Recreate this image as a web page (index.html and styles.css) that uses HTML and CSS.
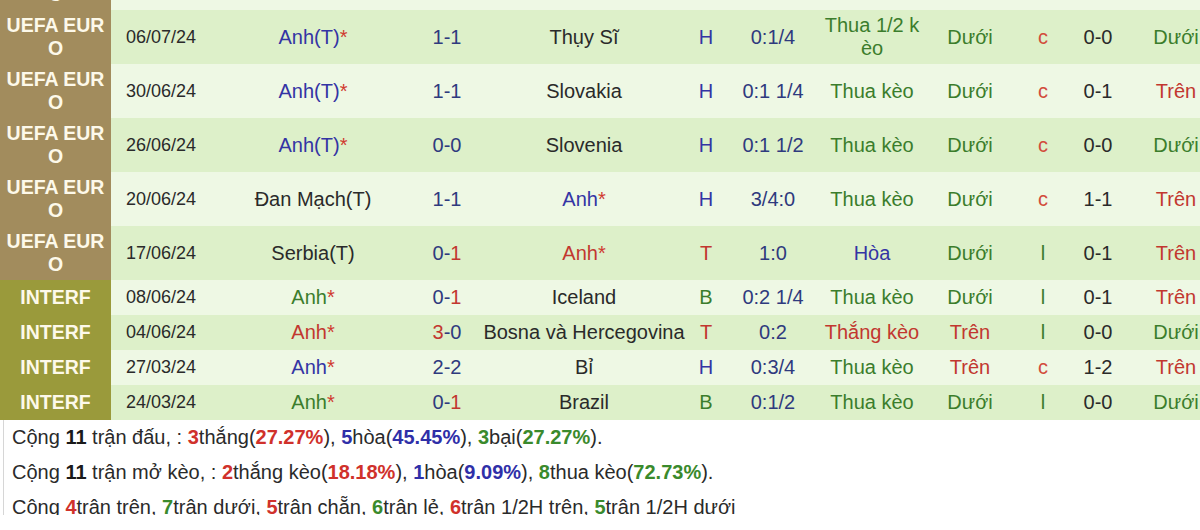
FILE: index.html
```html
<!DOCTYPE html>
<html lang="vi">
<head>
<meta charset="utf-8">
<link rel="stylesheet" href="styles.css">
</head>
<body>
<div class="frame">
  <div class="clip">
    <table class="matches">
      <colgroup>
        <col class="c-league"><col class="c-date"><col class="c-home"><col class="c-score"><col class="c-away"><col class="c-htb"><col class="c-odds"><col class="c-res"><col class="c-ou"><col class="c-cl"><col class="c-half"><col class="c-last">
      </colgroup>
      <tbody>
        <tr class="euro light">
          <td class="league">UEFA EURO</td><td></td><td></td><td></td><td></td><td></td><td></td><td></td><td></td><td></td><td></td><td></td>
        </tr>
        <tr class="euro dark">
          <td class="league">UEFA EURO</td><td class="date">06/07/24</td><td><span class="b">Anh(T)</span><span class="star">*</span></td><td class="n">1-1</td><td class="k">Thụy Sĩ</td><td class="b">H</td><td class="n">0:1/4</td><td class="g">Thua 1/2 k èo</td><td class="g">Dưới</td><td class="c">c</td><td class="k">0-0</td><td class="g">Dưới</td>
        </tr>
        <tr class="euro light">
          <td class="league">UEFA EURO</td><td class="date">30/06/24</td><td><span class="b">Anh(T)</span><span class="star">*</span></td><td class="n">1-1</td><td class="k">Slovakia</td><td class="b">H</td><td class="n">0:1 1/4</td><td class="g">Thua kèo</td><td class="g">Dưới</td><td class="c">c</td><td class="k">0-1</td><td class="r">Trên</td>
        </tr>
        <tr class="euro dark">
          <td class="league">UEFA EURO</td><td class="date">26/06/24</td><td><span class="b">Anh(T)</span><span class="star">*</span></td><td class="n">0-0</td><td class="k">Slovenia</td><td class="b">H</td><td class="n">0:1 1/2</td><td class="g">Thua kèo</td><td class="g">Dưới</td><td class="c">c</td><td class="k">0-0</td><td class="g">Dưới</td>
        </tr>
        <tr class="euro light">
          <td class="league">UEFA EURO</td><td class="date">20/06/24</td><td class="k">Đan Mạch(T)</td><td class="n">1-1</td><td><span class="b">Anh</span><span class="star">*</span></td><td class="b">H</td><td class="n">3/4:0</td><td class="g">Thua kèo</td><td class="g">Dưới</td><td class="c">c</td><td class="k">1-1</td><td class="r">Trên</td>
        </tr>
        <tr class="euro dark">
          <td class="league">UEFA EURO</td><td class="date">17/06/24</td><td class="k">Serbia(T)</td><td><span class="n">0-</span><span class="r">1</span></td><td><span class="r">Anh</span><span class="star">*</span></td><td class="r">T</td><td class="n">1:0</td><td class="b">Hòa</td><td class="g">Dưới</td><td class="g">l</td><td class="k">0-1</td><td class="r">Trên</td>
        </tr>
        <tr class="intf light">
          <td class="league">INTERF</td><td class="date">08/06/24</td><td><span class="g">Anh</span><span class="star">*</span></td><td><span class="n">0-</span><span class="r">1</span></td><td class="k">Iceland</td><td class="g">B</td><td class="n">0:2 1/4</td><td class="g">Thua kèo</td><td class="g">Dưới</td><td class="g">l</td><td class="k">0-1</td><td class="r">Trên</td>
        </tr>
        <tr class="intf dark">
          <td class="league">INTERF</td><td class="date">04/06/24</td><td><span class="r">Anh</span><span class="star">*</span></td><td><span class="r">3</span><span class="n">-0</span></td><td class="k">Bosna và Hercegovina</td><td class="r">T</td><td class="n">0:2</td><td class="r">Thắng kèo</td><td class="r">Trên</td><td class="g">l</td><td class="k">0-0</td><td class="g">Dưới</td>
        </tr>
        <tr class="intf light">
          <td class="league">INTERF</td><td class="date">27/03/24</td><td><span class="b">Anh</span><span class="star">*</span></td><td class="n">2-2</td><td class="k">Bỉ</td><td class="b">H</td><td class="n">0:3/4</td><td class="g">Thua kèo</td><td class="r">Trên</td><td class="c">c</td><td class="k">1-2</td><td class="r">Trên</td>
        </tr>
        <tr class="intf dark">
          <td class="league">INTERF</td><td class="date">24/03/24</td><td><span class="g">Anh</span><span class="star">*</span></td><td><span class="n">0-</span><span class="r">1</span></td><td class="k">Brazil</td><td class="g">B</td><td class="n">0:1/2</td><td class="g">Thua kèo</td><td class="g">Dưới</td><td class="g">l</td><td class="k">0-0</td><td class="g">Dưới</td>
        </tr>
      </tbody>
    </table>
    <div class="summary">
      <p>Cộng <b class="k">11</b> trận đấu, : <b class="r">3</b>thắng(<b class="r">27.27%</b>), <b class="b">5</b>hòa(<b class="b">45.45%</b>), <b class="g">3</b>bại(<b class="g">27.27%</b>).</p>
      <p>Cộng <b class="k">11</b> trận mở kèo, : <b class="r">2</b>thắng kèo(<b class="r">18.18%</b>), <b class="b">1</b>hòa(<b class="b">9.09%</b>), <b class="g">8</b>thua kèo(<b class="g">72.73%</b>).</p>
      <p>Cộng <b class="r">4</b>trận trên, <b class="g">7</b>trận dưới, <b class="r">5</b>trận chẵn, <b class="g">6</b>trận lẻ, <b class="r">6</b>trận 1/2H trên, <b class="g">5</b>trận 1/2H dưới</p>
    </div>
  </div>
</div>
</body>
</html>
```

FILE: styles.css
```css
html, body {
  margin: 0;
  padding: 0;
  background: #ffffff;
}

.frame {
  width: 1200px;
  height: 530px;
  overflow: hidden;
  background: #ffffff;
}

.clip {
  height: 515px;
  overflow: hidden;
  font-family: "Liberation Sans", Arial, sans-serif;
  font-size: 20px;
  color: #2a2a2a;
}

.matches {
  border-collapse: collapse;
  table-layout: fixed;
  width: 1223px;
  margin-top: -44px;
}

.c-league { width: 111px; }
.c-date { width: 100px; }
.c-home { width: 204px; }
.c-score { width: 64px; }
.c-away { width: 210px; }
.c-htb { width: 34px; }
.c-odds { width: 100px; }
.c-res { width: 98px; }
.c-ou { width: 98px; }
.c-cl { width: 48px; }
.c-half { width: 62px; }
.c-last { width: 94px; }

.matches td {
  padding: 0;
  text-align: center;
  vertical-align: middle;
  font-size: 20px;
  line-height: 23px;
  white-space: normal;
}

.matches td.date {
  font-size: 18px;
  color: #2a2a2a;
}

.euro td { height: 54px; }
.intf td { height: 35px; }

.light td { background: #eef8e4; }
.dark td { background: #ddf0c9; }

.matches td.league {
  color: #fdf9ea;
  font-weight: bold;
  font-size: 19.5px;
  line-height: 23px;
  word-break: break-all;
}

.euro td.league { background: #a28c5d; }
.intf td.league { background: #9a9a3b; }

.k { color: #2a2a2a; }
.b { color: #3434a4; }
.r { color: #c2372f; }
.g { color: #3b7d2c; }
.n { color: #2f3a7e; }
.c { color: #d24b3c; }
.star { color: #d03a30; }

.summary {
  margin-left: 3px;
  border-left: 1px solid #d6d6d6;
  padding-left: 8px;
  background: #ffffff;
}

.summary p {
  margin: 0;
  height: 35px;
  line-height: 35px;
  font-size: 20px;
  white-space: nowrap;
  color: #2a2a2a;
}

.summary b { font-weight: bold; }
.summary b.k { color: #1a1a1a; }
.summary b.r { color: #d0312b; }
.summary b.b { color: #2f2fa8; }
.summary b.g { color: #3a8a2c; }
```
